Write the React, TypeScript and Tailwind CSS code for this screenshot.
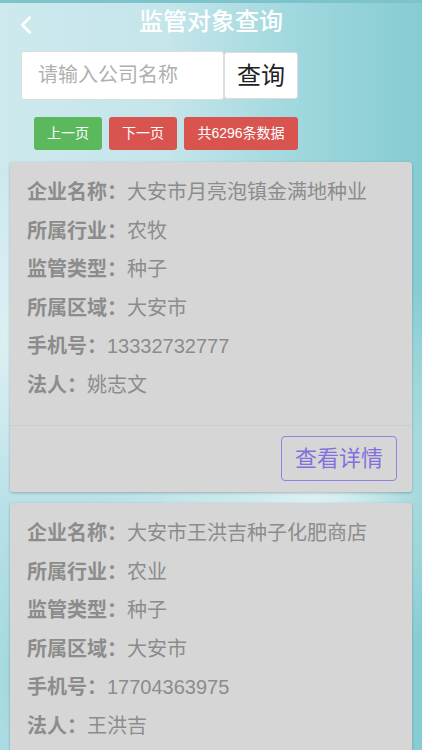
import { ChevronLeft } from "lucide-react";

type Company = {
  name: string;
  industry: string;
  type: string;
  region: string;
  phone: string;
  legal: string;
};

const companies: Company[] = [
  {
    name: "大安市月亮泡镇金满地种业",
    industry: "农牧",
    type: "种子",
    region: "大安市",
    phone: "13332732777",
    legal: "姚志文",
  },
  {
    name: "大安市王洪吉种子化肥商店",
    industry: "农业",
    type: "种子",
    region: "大安市",
    phone: "17704363975",
    legal: "王洪吉",
  },
];

const font = "font-['Liberation_Sans','Noto_Sans_CJK_SC',sans-serif]";

function Row({ label, value }: { label: string; value: string }) {
  return (
    <div className="flex h-[38.5px] items-center text-[20px] text-[#8c8c8c]">
      <span className="font-semibold">{label}：</span>
      <span>{value}</span>
    </div>
  );
}

function CompanyCard({ company }: { company: Company }) {
  return (
    <div className="rounded-[3px] bg-[#d6d6d6] shadow-[0_1px_3px_rgba(0,0,0,0.25)]">
      <div className="px-[17px] pt-[11px] pb-[21px]">
        <Row label="企业名称" value={company.name} />
        <Row label="所属行业" value={company.industry} />
        <Row label="监管类型" value={company.type} />
        <Row label="所属区域" value={company.region} />
        <Row label="手机号" value={company.phone} />
        <Row label="法人" value={company.legal} />
      </div>
      <div className="flex justify-end border-t border-[#cdcdcd] px-[15px] pt-[10px] pb-[11px]">
        <button className="h-[45px] w-[116px] rounded-[4px] border border-[#9282e4] text-[22px] text-[#8470dc]">
          查看详情
        </button>
      </div>
    </div>
  );
}

export default function App() {
  return (
    <div
      className={`${font} relative h-[750px] w-[422px] overflow-hidden bg-[linear-gradient(90deg,#cde9ee_0%,#c4e5ea_40%,#9fd8de_70%,#86ccd2_100%)]`}
    >
      <div className="pointer-events-none absolute inset-0 bg-[radial-gradient(ellipse_at_75%_62%,rgba(255,255,255,0.75),transparent_35%),radial-gradient(ellipse_at_10%_45%,rgba(255,255,255,0.35),transparent_30%),radial-gradient(ellipse_at_5%_90%,rgba(120,200,210,0.5),transparent_35%)]" />
      <div className="relative">
        <div className="h-[3px] bg-[#7cc3cb]" />
        <header className="relative flex h-[38px] items-center justify-center">
          <ChevronLeft className="absolute left-[11px] top-[7px] h-[30px] w-[30px] text-white" strokeWidth={2} />
          <h1 className="text-[24px] font-medium leading-none text-white">监管对象查询</h1>
        </header>
        <div className="mt-[10px] flex pl-[21px]">
          <input
            className="h-[49px] w-[203px] rounded-[3px] border border-[#ddd] bg-white px-[16px] text-[20px] placeholder:text-[#b0b0b0] outline-none"
            placeholder="请输入公司名称"
          />
          <button className="mt-[1px] h-[47px] w-[74px] rounded-[3px] border border-[#ddd] bg-white text-[24px] text-[#222]">
            查询
          </button>
        </div>
        <div className="mt-[17px] flex gap-[7px] pl-[34px]">
          <button className="h-[33px] w-[68px] rounded-[3px] bg-[#5cb85c] text-[14px] text-white">上一页</button>
          <button className="h-[33px] w-[68px] rounded-[3px] bg-[#d9534f] text-[14px] text-white">下一页</button>
          <button className="h-[33px] w-[114px] rounded-[3px] bg-[#d9534f] text-[14px] text-white">共6296条数据</button>
        </div>
        <div className="mt-[12px] flex flex-col gap-[11px] px-[10px]">
          {companies.map((c) => (
            <CompanyCard key={c.phone} company={c} />
          ))}
        </div>
      </div>
    </div>
  );
}
